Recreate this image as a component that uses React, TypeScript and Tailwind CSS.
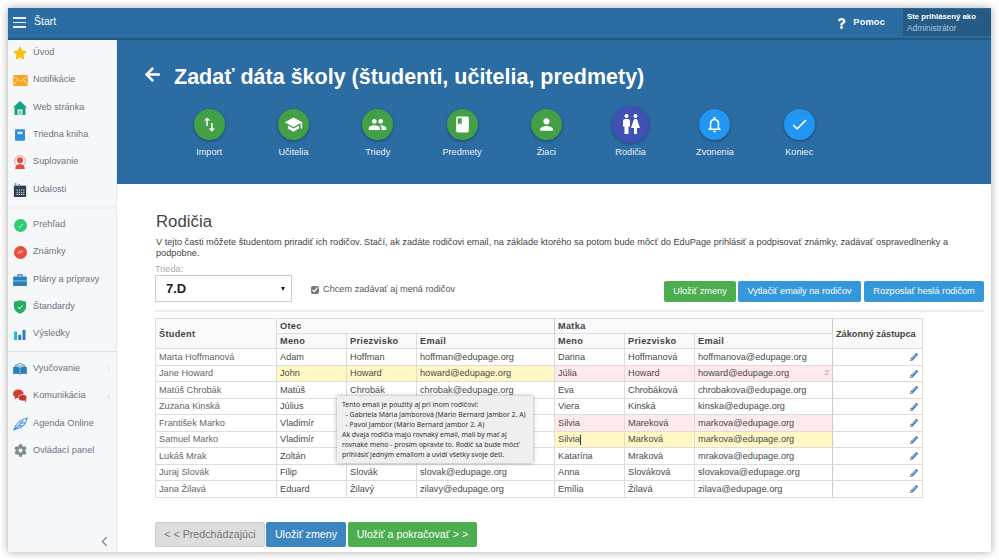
import React from 'react';
import { FaArrowLeft, FaCog, FaPencilAlt, FaQuestion, FaStar } from 'react-icons/fa';
import { MdBook, MdCheck, MdNotificationsNone, MdPeople, MdPerson, MdSchool, MdSwapVert, MdWc } from 'react-icons/md';

const Envelope = () => (
  <svg viewBox="0 0 16 12" className="w-[15px] h-[11px]">
    <rect width="16" height="12" fill="#f5a623" />
    <path d="M0 1l8 6 8-6M0 11l5-6M16 11l-5-6" stroke="#fde2b0" strokeWidth="1" fill="none" />
  </svg>
);
const HomeIcon = () => (
  <svg viewBox="0 0 14 14" className="w-[14px] h-[14px]">
    <path d="M7 0l7 6.500h-1.500V14h-3V8.500h-5V14h-3V6.500H0z" fill="#16a085" />
    <rect x="5.200" y="9.500" width="3.600" height="4.500" fill="#16a085" opacity="0.450" />
  </svg>
);
const BookIcon = () => (
  <svg viewBox="0 0 12 14" className="w-[10px] h-[12px]">
    <rect width="12" height="14" rx="1" fill="#2f8fdc" />
    <rect x="3" y="3" width="6" height="3" fill="#cfe6f8" />
  </svg>
);
const Substitute = () => (
  <svg viewBox="0 0 16 16" className="w-[14px] h-[14px]">
    <circle cx="8" cy="7" r="6.200" fill="none" stroke="#f08a80" strokeWidth="1" />
    <circle cx="8" cy="6" r="3.400" fill="#e8483c" />
    <path d="M2.500 16c0-4 2.500-5.500 5.500-5.500s5.500 1.500 5.500 5.500z" fill="#e8483c" />
  </svg>
);
const Calendar = () => (
  <svg viewBox="0 0 16 16" className="w-[14px] h-[14px]">
    <rect x="1" y="3" width="14" height="13" fill="#2c3e50" />
    <path d="M3 0v4M7 1v3" stroke="#7f8c8d" strokeWidth="1.600" />
    <path d="M4 8h9M4 10.500h9M4 13h9" stroke="#dfe6ea" strokeWidth="1.200" strokeDasharray="1.500 1" />
  </svg>
);
const Overview = () => (
  <svg viewBox="0 0 16 16" className="w-[13px] h-[13px]">
    <circle cx="8" cy="8" r="8" fill="#2ecc71" />
    <path d="M5 8.200l2.200 2.200L11 6" stroke="#bdf0d2" strokeWidth="1.200" fill="none" />
  </svg>
);
const Grades = () => (
  <svg viewBox="0 0 16 16" className="w-[13px] h-[13px]">
    <circle cx="8" cy="8" r="8" fill="#e74c3c" />
    <path d="M4.500 10l2-4 1.500 3 1-3.500 2.500 2" stroke="#fbd5d0" strokeWidth="1" fill="none" />
  </svg>
);
const Briefcase = () => (
  <svg viewBox="0 0 16 14" className="w-[14px] h-[12px]">
    <path d="M5.500 3V1h5v2" stroke="#2a80b9" strokeWidth="1.300" fill="none" />
    <rect y="3" width="16" height="11" rx="1" fill="#2a80b9" />
    <path d="M0 8h16" stroke="#bfe0f5" strokeWidth="0.800" />
  </svg>
);
const Shield = () => (
  <svg viewBox="0 0 14 16" className="w-[12px] h-[14px]">
    <path d="M7 0l7 2v6c0 4-3.500 6.500-7 8-3.500-1.500-7-4-7-8V2z" fill="#27ae60" />
    <path d="M4.500 8l2 2L10 6" stroke="#c6f0d6" strokeWidth="1.200" fill="none" />
  </svg>
);
const Bars = () => (
  <svg viewBox="0 0 14 13" className="w-[12px] h-[11px]">
    <rect y="3" width="3.500" height="10" fill="#1abcd6" />
    <rect x="5" y="7" width="3.500" height="6" fill="#2a80b9" />
    <rect x="10" y="1" width="3.500" height="12" fill="#2a80b9" />
  </svg>
);
const Teaching = () => (
  <svg viewBox="0 0 16 14" className="w-[14px] h-[12px]">
    <path d="M8 0l6 3.500H2z" fill="none" stroke="#2a80b9" strokeWidth="0.900" />
    <path d="M0 5c3-1 6-.5 8 .5 2-1 5-1.500 8-.5v8c-3-1-6-.5-8 .5-2-1-5-1.500-8-.5z" fill="#2a80b9" />
    <path d="M8 5.500v8" stroke="#bfe0f5" strokeWidth="0.700" />
  </svg>
);
const Chat = () => (
  <svg viewBox="0 0 16 15" className="w-[14px] h-[14px]">
    <ellipse cx="6" cy="5" rx="6" ry="4.800" fill="#d63b2f" />
    <path d="M2.500 8l-.5 3.500L6 9z" fill="#d63b2f" />
    <ellipse cx="11" cy="9.500" rx="4.800" ry="3.600" fill="#c0392b" stroke="#f5f7f9" strokeWidth="0.700" />
    <path d="M13 12.500l2 2-.5-3.500z" fill="#c0392b" />
  </svg>
);
const Feather = () => (
  <svg viewBox="0 0 16 16" className="w-[15px] h-[15px]">
    <path d="M1 15c1-5 4-10 14-13-1 6-4 10-10 11zM1 15L11 5M5 10.500l6 0M7 7.500h5.500" stroke="#3f8fe0" strokeWidth="1.100" fill="none" />
  </svg>
);

const firstGroup = [
  { label: 'Úvod', icon: <FaStar className="text-[#f6c21c] text-[14px]" /> },
  { label: 'Notifikácie', icon: <Envelope /> },
  { label: 'Web stránka', icon: <HomeIcon /> },
  { label: 'Triedna kniha', icon: <BookIcon /> },
  { label: 'Suplovanie', icon: <Substitute /> },
  { label: 'Udalosti', icon: <Calendar /> },
];
const secondGroup = [
  { label: 'Prehľad', icon: <Overview /> },
  { label: 'Známky', icon: <Grades /> },
  { label: 'Plány a prípravy', icon: <Briefcase /> },
  { label: 'Štandardy', icon: <Shield /> },
  { label: 'Výsledky', icon: <Bars /> },
];
const thirdGroup = [
  { label: 'Vyučovanie', icon: <Teaching />, more: true },
  { label: 'Komunikácia', icon: <Chat />, more: true },
  { label: 'Agenda Online', icon: <Feather /> },
  { label: 'Ovládací panel', icon: <FaCog className="text-[#7f8c8d] text-[13px]" /> },
];

const steps = [
  { label: 'Import', icon: <MdSwapVert />, bg: 'bg-[#43a047]' },
  { label: 'Učitelia', icon: <MdSchool />, bg: 'bg-[#43a047]' },
  { label: 'Triedy', icon: <MdPeople />, bg: 'bg-[#43a047]' },
  { label: 'Predmety', icon: <MdBook />, bg: 'bg-[#43a047]' },
  { label: 'Žiaci', icon: <MdPerson />, bg: 'bg-[#43a047]' },
  { label: 'Rodičia', icon: <MdWc />, bg: 'bg-[#3f51b5]', active: true },
  { label: 'Zvonenia', icon: <MdNotificationsNone />, bg: 'bg-[#2196f3]' },
  { label: 'Koniec', icon: <MdCheck />, bg: 'bg-[#2196f3]' },
];

type Row = {
  student: string;
  father: string[];
  mother: string[];
  fatherTone?: string;
  motherTone?: string;
  note?: string;
  caret?: boolean;
};

const yellow = 'bg-[#fff8c5]';
const pink = 'bg-[#fee9eb]';

// the tooltip covers the surname and email of the fathers in the middle rows
const rows: Row[] = [
  { student: 'Marta Hoffmanová', father: ['Adam', 'Hoffman', 'hoffman@edupage.org'], mother: ['Darina', 'Hoffmanová', 'hoffmanova@edupage.org'] },
  { student: 'Jane Howard', father: ['John', 'Howard', 'howard@edupage.org'], mother: ['Júlia', 'Howard', 'howard@edupage.org'], fatherTone: yellow, motherTone: pink, note: '2' },
  { student: 'Matúš Chrobák', father: ['Matúš', 'Chrobák', 'chrobak@edupage.org'], mother: ['Eva', 'Chrobáková', 'chrobakova@edupage.org'] },
  { student: 'Zuzana Kinská', father: ['Július', '', ''], mother: ['Viera', 'Kinská', 'kinska@edupage.org'] },
  { student: 'František Marko', father: ['Vladimír', '', ''], mother: ['Silvia', 'Mareková', 'markova@edupage.org'], motherTone: pink },
  { student: 'Samuel Marko', father: ['Vladimír', '', ''], mother: ['Silvia', 'Marková', 'markova@edupage.org'], motherTone: yellow, caret: true },
  { student: 'Lukáš Mrak', father: ['Zoltán', '', ''], mother: ['Katarína', 'Mraková', 'mrakova@edupage.org'] },
  { student: 'Juraj Slovák', father: ['Filip', 'Slovák', 'slovak@edupage.org'], mother: ['Anna', 'Slováková', 'slovakova@edupage.org'] },
  { student: 'Jana Žilavá', father: ['Eduard', 'Žilavý', 'zilavy@edupage.org'], mother: ['Emília', 'Žilavá', 'zilava@edupage.org'] },
];

const SideItem = ({ label, icon, more }: { label: string; icon: React.ReactNode; more?: boolean }) => (
  <div className="h-[27.3px] flex items-center text-[#6d7480]">
    <div className="w-[24px] flex justify-center shrink-0">{icon}</div>
    <span className="ml-[1px]">{label}</span>
    {more && <span className="ml-auto mr-[6px] text-[#d5d8dc] text-[10px]">›</span>}
  </div>
);

const th = 'border border-[#ddd] bg-[#f9f9f9] px-[3px] text-left font-bold text-[#444]';
const td = 'border border-[#ddd] px-[3px] text-[#4a4a4a] whitespace-nowrap';

export default function App() {
  return (
    <div className="w-[999px] h-[560px] bg-white p-[8px] overflow-hidden font-['Liberation_Sans',Arial,sans-serif] text-[9.2px]">
      <div className="w-[983px] h-[544px] flex flex-col bg-white shadow-[0_0_8px_rgba(0,0,0,0.35)] relative">
        <div className="h-[32px] shrink-0 bg-[#2b6ca3] border-b-2 border-[#24597f] flex items-center text-white relative z-10">
          <div className="ml-[5px] w-[13px] flex flex-col gap-[3px] -mt-[1px]">
            <div className="h-[1.500px] bg-white/90" />
            <div className="h-[1.500px] bg-white/90" />
            <div className="h-[1.500px] bg-white/90" />
          </div>
          <span className="ml-[8px] text-[10.500px] -mt-[3px]">Štart</span>
          <div className="ml-auto flex items-center self-stretch">
            <FaQuestion className="text-[11px] mr-[6px]" />
            <span className="font-bold mr-[18px] tracking-[0.2px]">Pomoc</span>
            <div className="w-[88px] h-[27px] bg-[#265b86] pl-[4px] pt-[3px] leading-[10.500px] self-start mt-[1px]">
              <div className="font-bold text-[7.800px]">Ste prihlásený ako</div>
              <div className="text-[#a9c6de] text-[8.400px]">Administrátor</div>
            </div>
          </div>
        </div>
        <div className="flex flex-1 min-h-0">
          <aside className="w-[109px] shrink-0 bg-[#f5f7f9] border-r border-[#e6e8eb] flex flex-col">
            <div className="-mt-[0.600px]">
              {firstGroup.map((item) => (
                <SideItem key={item.label} {...item} />
              ))}
            </div>
            <div className="h-[8.200px] flex items-center">
              <div className="w-full h-[3px] bg-[#eef0f3]" />
            </div>
            <div>
              {secondGroup.map((item) => (
                <SideItem key={item.label} {...item} />
              ))}
            </div>
            <div className="h-[7.400px] flex items-center">
              <div className="w-full h-[1px] bg-[#dcdfe3]" />
            </div>
            <div>
              {thirdGroup.map((item) => (
                <SideItem key={item.label} {...item} />
              ))}
            </div>
            <div className="mt-auto mb-[5px] self-end mr-[8px] text-[#6d7480]">
              <svg viewBox="0 0 8 12" className="w-[7px] h-[11px]">
                <path d="M6.500 1L1.500 6l5 5" stroke="currentColor" strokeWidth="1.300" fill="none" />
              </svg>
            </div>
          </aside>
          <main className="flex-1 min-w-0 flex flex-col">
            <section className="h-[144px] shrink-0 bg-[#2b6ca3] text-white">
              <div className="flex items-center pl-[27px] pt-[24px]">
                <FaArrowLeft className="text-[17px] mb-[6px]" />
                <h1 className="ml-[13px] text-[21.500px] leading-[26px] font-bold">Zadať dáta školy (študenti, učitelia, predmety)</h1>
              </div>
              <div className="flex pl-[50px] mt-[15px]">
                {steps.map((s) => (
                  <div key={s.label} className="w-[84.300px] flex flex-col items-center">
                    <div className="h-[38px] flex items-center">
                      <div
                        className={
                          s.active
                            ? `w-[37px] h-[37px] text-[24px] rounded-full flex items-center justify-center shadow-[0_1px_3px_rgba(0,0,0,0.35)] ${s.bg}`
                            : `w-[31px] h-[31px] text-[19px] rounded-full flex items-center justify-center shadow-[0_1px_3px_rgba(0,0,0,0.35)] ${s.bg}`
                        }
                      >
                        {s.icon}
                      </div>
                    </div>
                    <div className="mt-[3px] text-[#e8f0f6]">{s.label}</div>
                  </div>
                ))}
              </div>
            </section>
            <section className="flex-1 min-h-0 pl-[38px] pr-[7px] relative">
              <h2 className="text-[16.800px] leading-[22px] mt-[27px] ml-[1px] text-[#444]">Rodičia</h2>
              <p className="mt-[4px] ml-[1px] leading-[11px] text-[#444] w-[810px]">
                V tejto časti môžete študentom priradiť ich rodičov. Stačí, ak zadáte rodičovi email, na základe ktorého sa potom bude môcť do EduPage prihlásiť a podpisovať známky, zadávať ospravedlnenky a podpobne.
              </p>
              <div className="flex items-end mt-[5px]">
                <div>
                  <div className="text-[#aaa] leading-[11px]">Trieda:</div>
                  <div className="w-[137px] h-[27px] border border-[#ccc] flex items-center justify-between pl-[10px] pr-[6px] text-[13px] font-bold text-[#222]">
                    7.D
                    <span className="w-0 h-0 border-x-[2.500px] border-x-transparent border-t-[4px] border-t-[#222]" />
                  </div>
                </div>
                <div className="ml-[19px] mb-[5px] flex items-center text-[#555]">
                  <input type="checkbox" defaultChecked readOnly className="w-[8px] h-[8px] mr-[4px] accent-[#777]" />
                  Chcem zadávať aj mená rodičov
                </div>
                <div className="ml-auto flex gap-[2px] text-white">
                  <div className="w-[72px] h-[21px] bg-[#4cae4f] rounded-[2px] flex items-center justify-center">Uložiť zmeny</div>
                  <div className="w-[123px] h-[21px] bg-[#3498db] rounded-[2px] flex items-center justify-center">Vytlačiť emaily na rodičov</div>
                  <div className="w-[120px] h-[21px] bg-[#3498db] rounded-[2px] flex items-center justify-center ml-[1px]">Rozposlať heslá rodičom</div>
                </div>
              </div>
              <div className="h-[2px] bg-[#eee] mt-[8px]" />
              <table className="table-fixed border-collapse w-[767px] mt-[6px] leading-[10px]">
                <colgroup>
                  <col className="w-[121px]" />
                  <col className="w-[70px]" />
                  <col className="w-[70px]" />
                  <col className="w-[138px]" />
                  <col className="w-[70px]" />
                  <col className="w-[70px]" />
                  <col className="w-[138px]" />
                  <col className="w-[90px]" />
                </colgroup>
                <thead>
                  <tr className="h-[15px]">
                    <th rowSpan={2} className={`${th} tracking-[0.3px]`}>Študent</th>
                    <th colSpan={3} className={`${th} tracking-[0.3px] border-r-[#ccc]`}>Otec</th>
                    <th colSpan={3} className={`${th} tracking-[0.3px] border-r-[#ccc]`}>Matka</th>
                    <th rowSpan={2} className={`${th} whitespace-nowrap`}>Zákonný zástupca</th>
                  </tr>
                  <tr className="h-[15px]">
                    {['Meno', 'Priezvisko', 'Email', 'Meno', 'Priezvisko', 'Email'].map((h, i) => (
                      <th key={i} className={`${th} tracking-[0.3px]`}>{h}</th>
                    ))}
                  </tr>
                </thead>
                <tbody>
                  {rows.map((r) => (
                    <tr key={r.student} className="h-[16.500px]">
                      <td className={`${td} text-[#666]`}>{r.student}</td>
                      {r.father.map((v, i) => (
                        <td key={i} className={`${td} ${r.fatherTone ?? ''}`}>{v}</td>
                      ))}
                      {r.mother.map((v, i) => (
                        <td key={i} className={`${td} relative ${r.motherTone ?? ''} ${i === 2 ? 'border-r-[#ccc]' : ''}`}>
                          {v}
                          {r.caret && i === 0 && <span className="inline-block w-[1px] h-[10px] bg-[#333] align-middle" />}
                          {r.note && i === 2 && <span className="absolute right-[3px] top-[2px] text-[8px] text-[#aaa]">{r.note}</span>}
                        </td>
                      ))}
                      <td className={`${td} text-right pr-[4px]`}>
                        <FaPencilAlt className="inline text-[8px] text-[#3c7fb8]" />
                      </td>
                    </tr>
                  ))}
                </tbody>
              </table>
              <div className="absolute left-[220px] top-[212px] w-[196px] h-[67px] bg-[#efefef] shadow-[0_0_4px_rgba(0,0,0,0.4)] pl-[5px] pt-[4px] font-['Noto_Sans',sans-serif] text-[6.900px] leading-[9.900px] text-[#333] z-10 whitespace-nowrap">
                <div>Tento email je použitý aj pri inom rodičovi:</div>
                <div>&nbsp;&nbsp;- Gabriela Mária Jamborová (Mário Bernard Jambor 2. A)</div>
                <div>&nbsp;&nbsp;- Pavol Jambor (Mário Bernard Jambor 2. A)</div>
                <div>Ak dvaja rodičia majú rovnaký email, mali by mať aj</div>
                <div>rovnaké meno - prosím opravte to. Rodič sa bude môcť</div>
                <div>prihlásiť jedným emailom a uvidí všetky svoje deti.</div>
              </div>
              <div className="flex gap-[1px] mt-[24px] text-[10.700px]">
                <div className="w-[110px] h-[25px] bg-[#ddd] border border-[#ccc] rounded-[2px] flex items-center justify-center text-[#777]">&lt; &lt; Predchádzajúci</div>
                <div className="w-[80px] h-[25px] bg-[#3d85c0] rounded-[2px] flex items-center justify-center text-white">Uložiť zmeny</div>
                <div className="w-[129px] h-[25px] ml-[1px] bg-[#4cae4f] rounded-[2px] flex items-center justify-center text-white">Uložiť a pokračovať &gt; &gt;</div>
              </div>
            </section>
          </main>
        </div>
      </div>
    </div>
  );
}
